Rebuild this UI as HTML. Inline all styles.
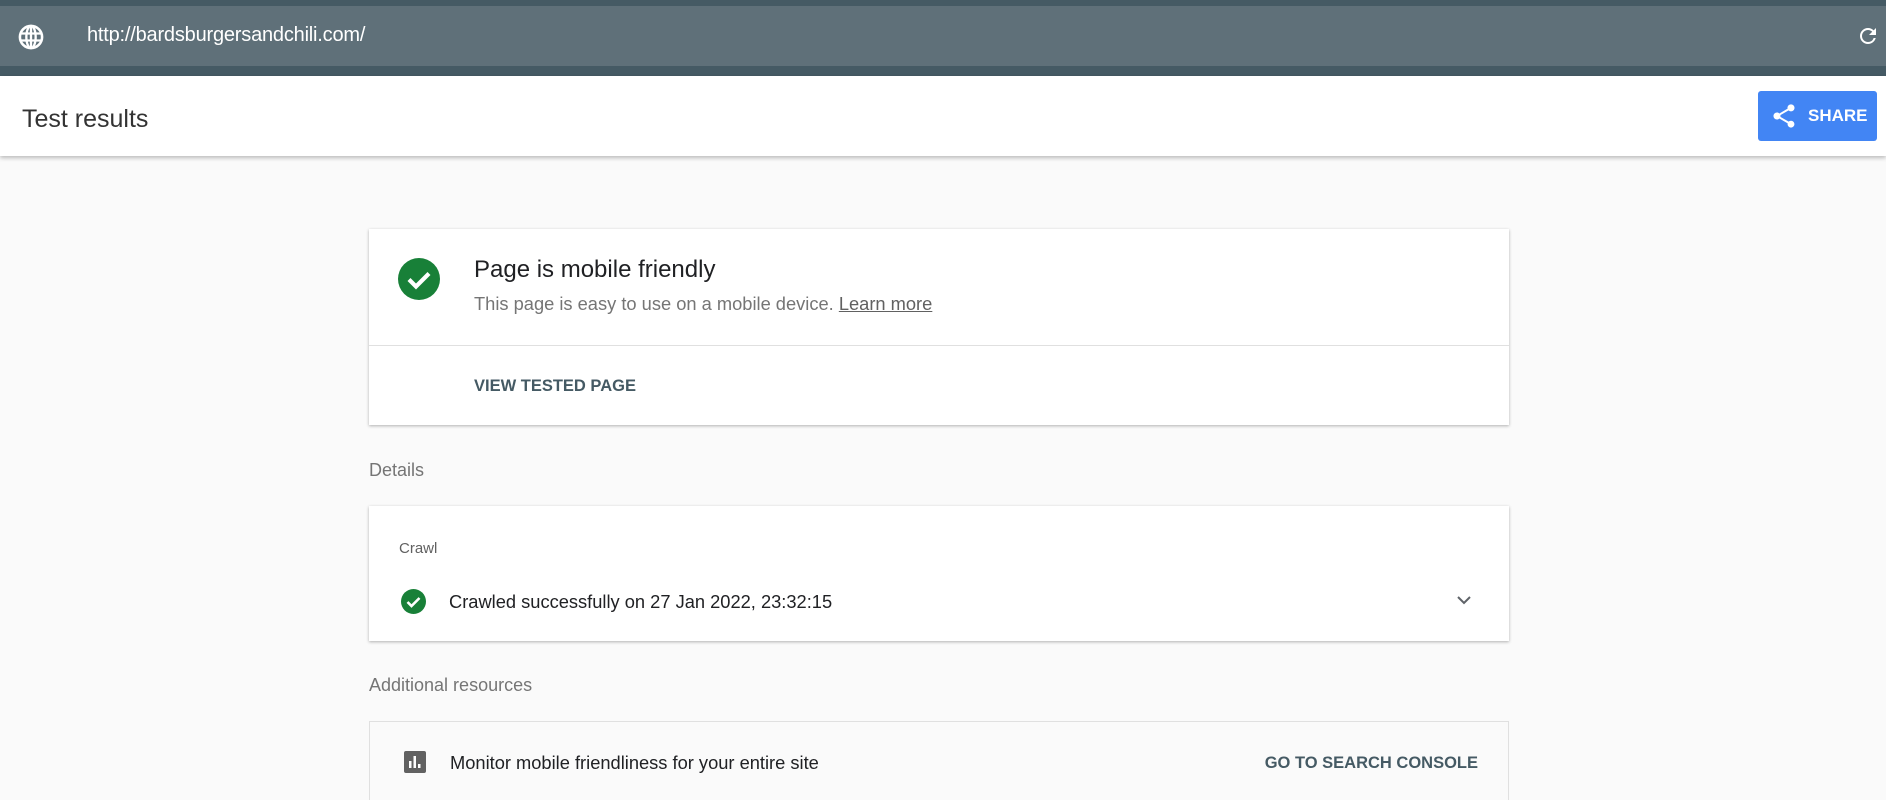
<!DOCTYPE html>
<html style="overflow:hidden;height:800px"><head><meta charset="utf-8"><style>
*{margin:0;padding:0;box-sizing:border-box}
body{width:1886px;height:800px;overflow:hidden;background:#fafafa;font-family:"Liberation Sans",Roboto,sans-serif;position:relative}
.abs{position:absolute}
.top{left:0;top:0;width:1886px;height:76px;background:#455a64}
.bar{left:0;top:6px;width:1886px;height:60px;background:#5f7079}
.url{left:87px;top:24px;color:#fff;font-size:20px;letter-spacing:-0.2px}
.hdr{left:0;top:76px;width:1886px;height:80px;background:#fff;box-shadow:0 2px 4px rgba(0,0,0,.25)}
.title{left:22px;top:105px;font-size:25px;color:#333}
.share{left:1758px;top:91px;width:119px;height:50px;background:#4285f4;border-radius:3px;color:#fff;font-weight:bold;font-size:17px}
.card{background:#fff;box-shadow:0 1px 3px rgba(0,0,0,.3);left:369px;width:1140px}
.h1{left:105px;top:27px;font-size:24px;color:#202124}
.sub{left:105px;top:64px;font-size:18.3px;color:#757575}
.sub u{color:#616161}
.btn{font-size:16.5px;font-weight:bold;color:#455a64}
.lbl{font-size:18px;color:#757575}
</style></head><body>
<div class="abs top"></div>
<div class="abs bar"></div>
<svg class="abs" style="left:17px;top:23px" width="28" height="28" viewBox="0 0 24 24"><circle cx="12" cy="12" r="9.5" fill="none" stroke="#fff" stroke-width="2.2"/><ellipse cx="12" cy="12" rx="4" ry="9.5" fill="none" stroke="#fff" stroke-width="2"/><path d="M3 9h18M3 15h18M12 2.5v19" stroke="#fff" stroke-width="2"/></svg>
<div class="abs url">http://bardsburgersandchili.com/</div>
<svg class="abs" style="left:1856px;top:24px" width="24" height="24" viewBox="0 0 24 24"><path fill="#fff" d="M17.65 6.35A7.958 7.958 0 0012 4c-4.420 0-7.99 3.58-7.99 8s3.57 8 7.99 8c3.73 0 6.84-2.55 7.73-6h-2.08A5.99 5.99 0 0112 18c-3.31 0-6-2.69-6-6s2.69-6 6-6c1.66 0 3.14.69 4.22 1.78L13 11h7V4l-2.35 2.350z"/></svg>
<div class="abs hdr"></div>
<div class="abs title">Test results</div>
<div class="abs share">
<svg class="abs" style="left:12px;top:11px" width="28" height="28" viewBox="0 0 24 24"><path fill="#fff" d="M18 16.08c-.76 0-1.44.3-1.96.77L8.91 12.7c.05-.23.09-.46.09-.7s-.04-.47-.09-.7l7.05-4.11c.54.5 1.25.81 2.04.81 1.66 0 3-1.34 3-3s-1.34-3-3-3-3 1.34-3 3c0 .24.04.47.09.7L8.04 9.81C7.5 9.31 6.79 9 6 9c-1.66 0-3 1.34-3 3s1.34 3 3 3c.79 0 1.5-.31 2.04-.81l7.12 4.16c-.05.21-.08.43-.08.65 0 1.61 1.31 2.92 2.92 2.92s2.92-1.31 2.92-2.92-1.31-2.92-2.92-2.92z"/></svg>
<span class="abs" style="left:50px;top:15px">SHARE</span></div>

<div class="abs card" style="top:229px;height:196px">
<svg class="abs" style="left:29px;top:29px" width="42" height="42" viewBox="0 0 42 42"><circle cx="21" cy="21" r="21" fill="#188038"/><path d="M11 21.5l7 7 13-13" fill="none" stroke="#fff" stroke-width="4.2"/></svg>
<div class="abs h1">Page is mobile friendly</div>
<div class="abs sub">This page is easy to use on a mobile device. <u>Learn more</u></div>
<div class="abs" style="left:0;top:116px;width:1140px;height:1px;background:#e0e0e0"></div>
<div class="abs btn" style="left:105px;top:148px">VIEW TESTED PAGE</div>
</div>

<div class="abs lbl" style="left:369px;top:460px">Details</div>

<div class="abs card" style="top:506px;height:135px">
<div class="abs" style="left:30px;top:34px;font-size:15px;color:#616161">Crawl</div>
<svg class="abs" style="left:32px;top:83px" width="25" height="25" viewBox="0 0 25 25"><circle cx="12.5" cy="12.5" r="12.5" fill="#188038"/><path d="M6.5 13l4 4 8-8" fill="none" stroke="#fff" stroke-width="2.6"/></svg>
<div class="abs" style="left:80px;top:85px;font-size:18.3px;color:#202124">Crawled successfully on 27 Jan 2022, 23:32:15</div>
<svg class="abs" style="left:1087px;top:88px" width="16" height="12" viewBox="0 0 16 12"><path d="M2 3l6 6 6-6" fill="none" stroke="#5f6368" stroke-width="2"/></svg>
</div>

<div class="abs lbl" style="left:369px;top:675px">Additional resources</div>

<div class="abs" style="left:369px;top:721px;width:1140px;height:79px;border:1px solid #e0e0e0;border-bottom:none;background:#fafafa">
<svg class="abs" style="left:34px;top:29px" width="22" height="22" viewBox="0 0 22 22"><rect width="22" height="22" rx="2" fill="#616161"/><rect x="5" y="10" width="2.5" height="7" fill="#fff"/><rect x="9.5" y="5" width="2.5" height="12" fill="#fff"/><rect x="14" y="13" width="2.5" height="4" fill="#fff"/></svg>
<div class="abs" style="left:80px;top:30px;font-size:18.3px;color:#202124">Monitor mobile friendliness for your entire site</div>
<div class="abs btn" style="right:30px;top:32px">GO TO SEARCH CONSOLE</div>
</div>
</body></html>
